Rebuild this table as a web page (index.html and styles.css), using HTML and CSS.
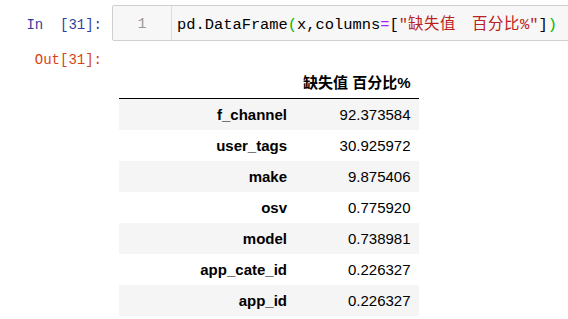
FILE: index.html
```html
<!DOCTYPE html>
<html>
<head>
<meta charset="utf-8">
<link rel="stylesheet" href="styles.css">
</head>
<body>
<div class="cell">
  <div class="in-row">
    <div class="prompt prompt-in">In&nbsp;&nbsp;[31]:</div>
    <div class="code-box">
      <div class="gutter">1</div>
      <div class="code"><span>pd.DataFrame</span><span class="bracket">(</span><span>x,columns</span><span class="op">=</span><span>[</span><span class="str">"<span class="cjk">缺失值　百分比</span>%"</span><span>]</span><span class="bracket">)</span></div>
    </div>
  </div>
  <div class="out-row">
    <div class="prompt prompt-out">Out[31]:</div>
    <table class="df">
      <thead>
        <tr><th class="idx"></th><th class="val">缺失值 百分比%</th></tr>
      </thead>
      <tbody>
        <tr><th class="idx">f_channel</th><td>92.373584</td></tr>
        <tr><th class="idx">user_tags</th><td>30.925972</td></tr>
        <tr><th class="idx">make</th><td>9.875406</td></tr>
        <tr><th class="idx">osv</th><td>0.775920</td></tr>
        <tr><th class="idx">model</th><td>0.738981</td></tr>
        <tr><th class="idx">app_cate_id</th><td>0.226327</td></tr>
        <tr><th class="idx">app_id</th><td>0.226327</td></tr>
      </tbody>
    </table>
  </div>
</div>
</body>
</html>
```
FILE: styles.css
```css
html, body {
  margin: 0;
  padding: 0;
  background: #ffffff;
  overflow: hidden;
}
.cell {
  padding-top: 5px;
  width: 600px;
}
.in-row {
  display: flex;
  align-items: flex-start;
}
.prompt {
  width: 102px;
  flex: none;
  text-align: right;
  font-family: "Liberation Mono", "Noto Sans CJK SC", monospace;
  font-size: 14px;
}
.prompt-in {
  color: #303F9F;
  padding-top: 10px;
  line-height: 20px;
  margin-right: 10px;
}
.prompt-out {
  color: #D84315;
  line-height: 26px;
}
.code-box {
  flex: 1;
  display: flex;
  border: 1px solid #cfcfcf;
  border-radius: 2px;
  background: #f7f7f7;
  height: 34px;
}
.gutter {
  width: 58px;
  flex: none;
  border-right: 1px solid #dddddd;
  text-align: center;
  color: #999999;
  font-family: "Liberation Mono", monospace;
  font-size: 15px;
  line-height: 20px;
  padding-top: 9px;
}
.code {
  padding: 9px 0 0 5px;
  font-family: "Liberation Mono", "Noto Sans CJK SC", monospace;
  font-size: 15.4px;
  line-height: 20px;
  color: #000000;
  white-space: pre;
}
.bracket { color: #00bb00; }
.op { color: #aa22ff; }
.str { color: #ba2121; }
.cjk { letter-spacing: 0.6px; }
.out-row {
  display: flex;
  align-items: flex-start;
  margin-top: 6px;
}
.df {
  margin-top: 20px;
  margin-left: 17px;
  border-collapse: collapse;
  font-family: "Liberation Sans", "Noto Sans CJK SC", sans-serif;
  font-size: 15px;
  color: #000000;
}
.df th, .df td {
  padding: 7px 8px;
  line-height: 17px;
  text-align: right;
  white-space: nowrap;
}
.df thead th {
  border-bottom: 1px solid #000000;
  font-weight: bold;
}
.df th.idx {
  width: 160px;
  font-weight: bold;
}
.df th.val, .df td {
  width: 105px;
}
.df tbody tr:nth-child(odd) {
  background: #f5f5f5;
}
```
